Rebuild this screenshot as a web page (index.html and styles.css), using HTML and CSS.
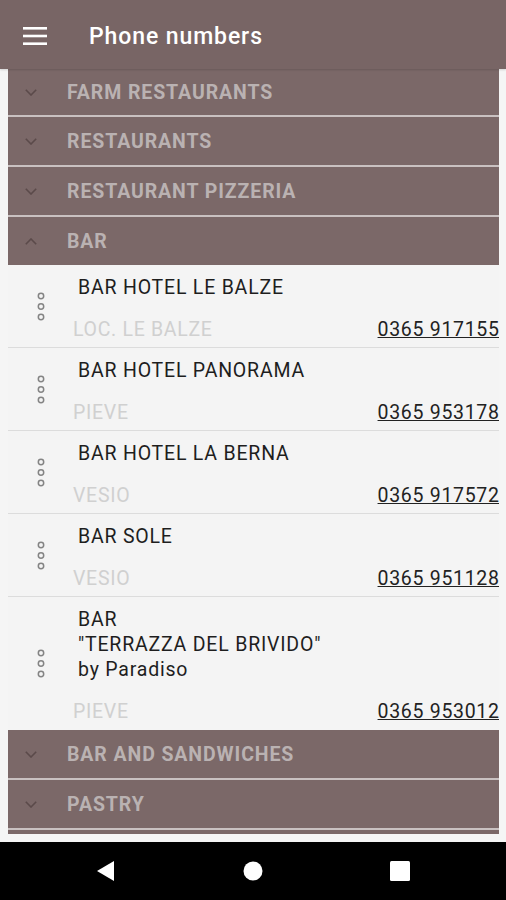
FILE: index.html
```html
<!DOCTYPE html>
<html lang="it">
<head>
  <meta charset="UTF-8" />
  <meta name="viewport" content="width=device-width, initial-scale=1.0" />
  <title>Phone numbers</title>
  <link rel="stylesheet" href="styles.css">
</head>
<body>
  <header class="app-bar">
    <svg class="menu-icon" width="24" height="18" viewBox="0 0 24 18">
      <rect x="0" y="0" width="24" height="2.6" fill="#fff" />
      <rect x="0" y="7.7" width="24" height="2.6" fill="#fff" />
      <rect x="0" y="15.4" width="24" height="2.6" fill="#fff" />
    </svg>
    <h1 class="app-title">Phone numbers</h1>
  </header>

  <main class="content">
    <div class="list">
      <div class="group-header first">
        <svg class="chevron" width="12" height="7" viewBox="0 0 12 7"><path d="M0.8 0.8 L6 6 L11.2 0.8" /></svg>
        <span>FARM RESTAURANTS</span>
      </div>
      <div class="group-header">
        <svg class="chevron" width="12" height="7" viewBox="0 0 12 7"><path d="M0.8 0.8 L6 6 L11.2 0.8" /></svg>
        <span>RESTAURANTS</span>
      </div>
      <div class="group-header">
        <svg class="chevron" width="12" height="7" viewBox="0 0 12 7"><path d="M0.8 0.8 L6 6 L11.2 0.8" /></svg>
        <span>RESTAURANT PIZZERIA</span>
      </div>
      <div class="group-header open">
        <svg class="chevron" width="12" height="7" viewBox="0 0 12 7"><path d="M0.8 6.2 L6 1 L11.2 6.2" /></svg>
        <span>BAR</span>
      </div>

      <div class="entry">
        <div class="entry-dots">
          <svg width="10" height="30" viewBox="0 0 10 30">
            <circle cx="5" cy="4" r="2.7" />
            <circle cx="5" cy="14.5" r="2.7" />
            <circle cx="5" cy="25" r="2.7" />
          </svg>
        </div>
        <div class="entry-body">
          <div class="entry-name">BAR HOTEL LE BALZE</div>
          <div class="entry-row">
            <span class="entry-place">LOC. LE BALZE</span>
            <a class="entry-phone" href="#">0365 917155</a>
          </div>
        </div>
      </div>

      <div class="entry">
        <div class="entry-dots">
          <svg width="10" height="30" viewBox="0 0 10 30">
            <circle cx="5" cy="4" r="2.7" />
            <circle cx="5" cy="14.5" r="2.7" />
            <circle cx="5" cy="25" r="2.7" />
          </svg>
        </div>
        <div class="entry-body">
          <div class="entry-name">BAR HOTEL PANORAMA</div>
          <div class="entry-row">
            <span class="entry-place">PIEVE</span>
            <a class="entry-phone" href="#">0365 953178</a>
          </div>
        </div>
      </div>

      <div class="entry">
        <div class="entry-dots">
          <svg width="10" height="30" viewBox="0 0 10 30">
            <circle cx="5" cy="4" r="2.7" />
            <circle cx="5" cy="14.5" r="2.7" />
            <circle cx="5" cy="25" r="2.7" />
          </svg>
        </div>
        <div class="entry-body">
          <div class="entry-name">BAR HOTEL LA BERNA</div>
          <div class="entry-row">
            <span class="entry-place">VESIO</span>
            <a class="entry-phone" href="#">0365 917572</a>
          </div>
        </div>
      </div>

      <div class="entry">
        <div class="entry-dots">
          <svg width="10" height="30" viewBox="0 0 10 30">
            <circle cx="5" cy="4" r="2.7" />
            <circle cx="5" cy="14.5" r="2.7" />
            <circle cx="5" cy="25" r="2.7" />
          </svg>
        </div>
        <div class="entry-body">
          <div class="entry-name">BAR SOLE</div>
          <div class="entry-row">
            <span class="entry-place">VESIO</span>
            <a class="entry-phone" href="#">0365 951128</a>
          </div>
        </div>
      </div>

      <div class="entry last">
        <div class="entry-dots">
          <svg width="10" height="30" viewBox="0 0 10 30">
            <circle cx="5" cy="4" r="2.7" />
            <circle cx="5" cy="14.5" r="2.7" />
            <circle cx="5" cy="25" r="2.7" />
          </svg>
        </div>
        <div class="entry-body">
          <div class="entry-name">BAR<br>"TERRAZZA DEL BRIVIDO"<br>by Paradiso</div>
          <div class="entry-row">
            <span class="entry-place">PIEVE</span>
            <a class="entry-phone" href="#">0365 953012</a>
          </div>
        </div>
      </div>

      <div class="group-header">
        <svg class="chevron" width="12" height="7" viewBox="0 0 12 7"><path d="M0.8 0.8 L6 6 L11.2 0.8" /></svg>
        <span>BAR AND SANDWICHES</span>
      </div>
      <div class="group-header">
        <svg class="chevron" width="12" height="7" viewBox="0 0 12 7"><path d="M0.8 0.8 L6 6 L11.2 0.8" /></svg>
        <span>PASTRY</span>
      </div>
      <div class="group-header"></div>
    </div>
  </main>

  <nav class="nav-bar">
    <div class="nav-btn">
      <svg width="20" height="22" viewBox="0 0 20 22"><path d="M18 1 L18 21 L1 11 Z" fill="#fff" /></svg>
    </div>
    <div class="nav-btn">
      <svg width="20" height="20" viewBox="0 0 20 20"><circle cx="10" cy="10" r="9.5" fill="#fff" /></svg>
    </div>
    <div class="nav-btn">
      <svg width="20" height="20" viewBox="0 0 20 20"><rect x="0" y="0" width="20" height="20" rx="1.5" fill="#fff" /></svg>
    </div>
  </nav>
</body>
</html>
```

FILE: styles.css
```css
body {
  margin: 0;
  width: 506px;
  height: 900px;
  display: flex;
  flex-direction: column;
  font-family: Roboto, 'Noto Sans', sans-serif;
  background-color: #f5f5f5;
  overflow: hidden;
}
.app-bar {
  height: 69px;
  box-sizing: border-box;
  flex-shrink: 0;
  display: flex;
  align-items: center;
  padding: 3px 0 0 23px;
  background-color: #786565;
  box-shadow: 0 1px 2px rgba(0, 0, 0, 0.15);
  position: relative;
  z-index: 1;
}
.menu-icon {
  display: block;
  margin-top: -1px;
}
.app-title {
  margin: 0 0 0 42px;
  font-size: 23px;
  font-weight: 500;
  letter-spacing: 0.9px;
  color: #fff;
}
.content {
  flex: 1;
  padding: 0 7px 8px 8px;
  overflow: hidden;
}
.list {
  height: 765px;
  overflow: hidden;
}
.group-header {
  height: 48px;
  display: flex;
  align-items: center;
  padding-left: 17px;
  background-color: #7b6868;
  border-bottom: 2px solid #c9c1c1;
}
.group-header.first {
  height: 46px;
}
.group-header.open {
  border-bottom: none;
}
.chevron {
  display: block;
  flex-shrink: 0;
}
.chevron path {
  fill: none;
  stroke: #5b4a4a;
  stroke-width: 1.6;
}
.group-header span {
  margin-left: 30px;
  font-size: 19.5px;
  font-weight: bold;
  letter-spacing: 0.9px;
  color: #bab2b2;
}
.entry {
  display: flex;
  align-items: stretch;
  padding: 10px 0 5px;
  background-color: #f4f4f4;
  border-bottom: 1px solid #dcdcdc;
}
.entry.last {
  border-bottom: none;
  padding-bottom: 6px;
}
.entry-dots {
  width: 65px;
  flex-shrink: 0;
  display: flex;
  align-items: center;
  justify-content: center;
  margin-top: -10px;
  margin-bottom: -6px;
}
.entry-dots circle {
  fill: none;
  stroke: #848484;
  stroke-width: 1.5;
}
.entry-body {
  flex: 1;
  min-width: 0;
}
.entry-name {
  padding-left: 5px;
  font-size: 19.5px;
  line-height: 25px;
  letter-spacing: 0.8px;
  color: #1e1e1e;
}
.entry-row {
  display: flex;
  justify-content: space-between;
  margin-top: 17px;
  font-size: 19.5px;
  line-height: 25px;
  letter-spacing: 0.7px;
}
.entry-place {
  color: #d0d0d0;
}
.entry-phone {
  margin-right: -0.7px;
  color: #222;
  text-decoration: underline;
}
.nav-bar {
  height: 58px;
  flex-shrink: 0;
  display: flex;
  align-items: center;
  justify-content: center;
  gap: 107px;
  background-color: #000;
}
.nav-btn {
  width: 40px;
  display: flex;
  justify-content: center;
}
.nav-btn svg {
  display: block;
}
```
